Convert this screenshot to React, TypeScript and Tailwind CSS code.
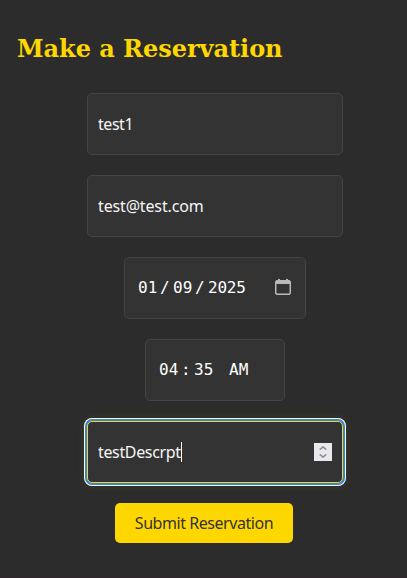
import type { ReactNode } from "react";

const field =
  "flex h-[62px] items-center rounded-[5px] border border-[#444444] bg-[#333333] text-[#f5f5f5]";

function Cells({ parts }: { parts: { text: string; className: string }[] }) {
  return (
    <div className="flex font-['DejaVu_Sans_Mono',monospace] text-base leading-6 text-white">
      {parts.map((part, i) => (
        <span key={i} className={part.className}>
          {part.text}
        </span>
      ))}
    </div>
  );
}

function TextField({ children }: { children: ReactNode }) {
  return <div className={`${field} w-64 pl-2.5`}>{children}</div>;
}

export default function App() {
  return (
    <main className="flex h-[578px] w-[407px] flex-col border-b border-[#30252a] bg-[#2c2c2c] font-['Noto_Sans',sans-serif] text-base leading-6">
      <h1 className="mt-[33px] ml-[17px] h-8 font-['DejaVu_Serif',serif] text-2xl leading-8 font-bold tracking-[-0.03px] whitespace-nowrap text-[#ffd700]">
        Make a Reservation
      </h1>
      <form className="mt-7 flex flex-col gap-5">
        <div className="ml-[23px] flex flex-col items-center gap-5">
          <TextField>
            <span className="tracking-[-0.45px]">test1</span>
          </TextField>
          <TextField>
            <span className="tracking-[-0.15px]">test@test.com</span>
          </TextField>
          <div className={`${field} w-[182px] pr-3.5 pl-[13px]`}>
            <Cells
              parts={[
                { text: "01", className: "w-[22px]" },
                { text: "/", className: "w-[13px]" },
                { text: "09", className: "w-[22px]" },
                { text: "/", className: "w-[13px]" },
                { text: "2025", className: "tracking-[-0.2px]" },
              ]}
            />
            <svg className="mb-0.5 ml-auto" width="16" height="16" viewBox="0 0 16 16" fill="none">
              <path
                d="M3 0h2v1h6V0h2v1h1.500L16 2.500v12L14.500 16h-13L0 14.500v-12L1.500 1H3zM1.500 5v9l.5.500h12l.5-.5V5z"
                fill="#b9b9b9"
                fillRule="evenodd"
              />
            </svg>
          </div>
          <div className={`${field} w-[140px] pl-[13px]`}>
            <Cells
              parts={[
                { text: "04", className: "w-[22px]" },
                { text: ":", className: "w-[13px]" },
                { text: "35", className: "w-[35px]" },
                { text: "AM", className: "" },
              ]}
            />
          </div>
          <div className="flex h-[62px] w-64 items-center rounded-[5px] border border-[#ffd700] bg-[#333333] pr-2.5 pl-2.5 text-[#f5f5f5] shadow-[0_0_0_2px_#3584e4,0_0_0_3px_#ffffff,0_0_10px_3px_rgba(255,215,0,0.08)]">
            <span className="tracking-[-0.35px]">testDescrpt</span>
            <span className="h-5 w-px bg-white" />
            <span className="ml-auto flex size-[18px] items-center justify-center bg-[#e9e9ed]">
              <svg width="8" height="12" viewBox="0 0 8 12" fill="none" stroke="#8f8f9d" strokeWidth="1.7">
                <path d="M.7 3.700 4 .9l3.300 2.800M.7 8.300 4 11.100l3.300-2.800" />
              </svg>
            </span>
          </div>
        </div>
        <button
          type="button"
          className="ml-[115px] h-10 w-[178px] rounded-[5px] bg-[#ffd700] tracking-[-0.45px] whitespace-nowrap text-[#333333]"
        >
          Submit Reservation
        </button>
      </form>
    </main>
  );
}
